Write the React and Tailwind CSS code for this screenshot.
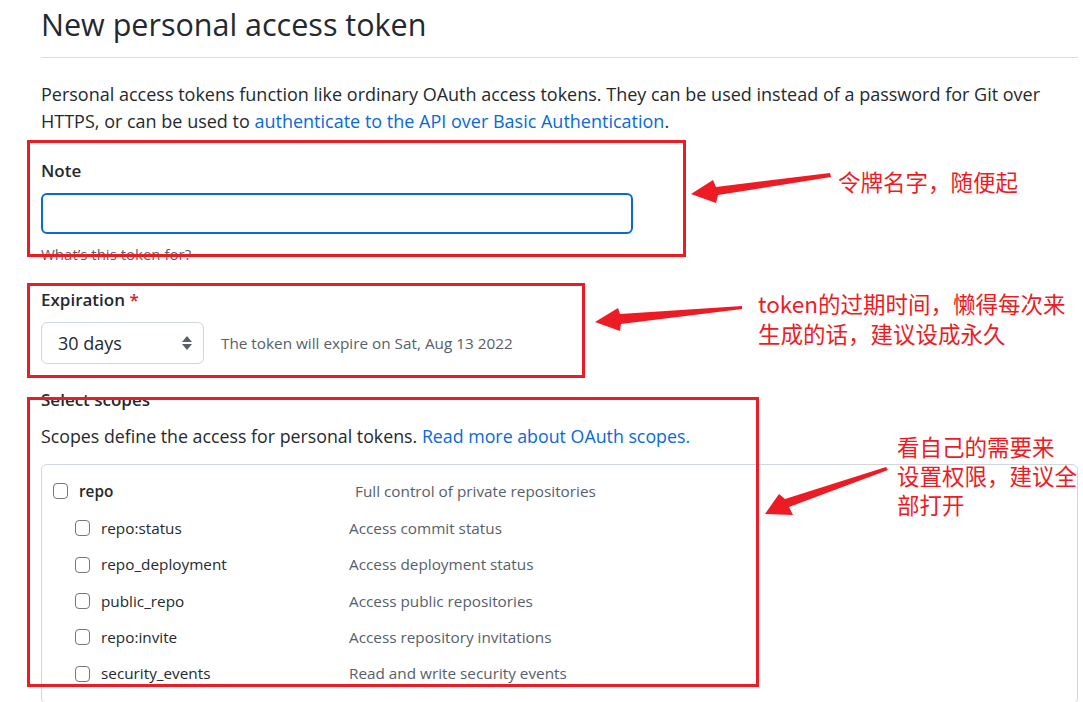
import React from "react";

const rows = [
  ["repo:status", "Access commit status"],
  ["repo_deployment", "Access deployment status"],
  ["public_repo", "Access public repositories"],
  ["repo:invite", "Access repository invitations"],
  ["security_events", "Read and write security events"],
];

function Box() {
  return <span className="inline-block w-[15px] h-[16px] rounded-[4px] border border-[#767676] bg-white shrink-0" />;
}

export default function App() {
  return (
    <div className="relative w-[1083px] h-[702px] overflow-hidden bg-white text-[#24292f] font-['Open_Sans','Noto_Sans',sans-serif]">
      <div className="pl-[41px] pr-[5px]">
        <h1 className="text-[30.5px] leading-[40px] pt-[4px] pb-[13px] border-b border-[#d8dee4] font-normal">
          New personal access token
        </h1>
        <p className="mt-[23px] w-[1000px] text-[18px] leading-[27px]">
          Personal access tokens function like ordinary OAuth access tokens. They can be used instead of a password for Git over HTTPS, or can be used to <span className="text-[#0969da]">authenticate to the API over Basic Authentication</span>.
        </p>
        <div className="mt-[23px] text-[17px] leading-[25px] font-semibold">Note</div>
        <div className="mt-[10px] w-[592px] h-[41px] rounded-[6px] border-2 border-[#0969da] bg-white" />
        <div className="mt-[10px] text-[15px] leading-[21px] text-[#57606a]">What’s this token for?</div>
        <div className="mt-[22px] text-[17px] leading-[25px] font-semibold">
          Expiration <span className="text-[#cf222e]">*</span>
        </div>
        <div className="mt-[10px] flex items-center">
          <div className="w-[163px] h-[42px] rounded-[6px] border border-[#d0d7de] bg-white flex items-center justify-between pl-[16px] pr-[10px]">
            <span className="text-[18px]">30 days</span>
            <svg width="12" height="18" viewBox="0 0 12 18">
              <path d="M6 2 L11 8 L1 8 Z" fill="#57606a" />
              <path d="M6 16 L11 10 L1 10 Z" fill="#57606a" />
            </svg>
          </div>
          <span className="ml-[17px] text-[15.3px] text-[#57606a]">The token will expire on Sat, Aug 13 2022</span>
        </div>
        <div className="mt-[23px] text-[17px] leading-[25px] font-semibold">Select scopes</div>
        <p className="mt-[10px] text-[17.8px] leading-[28px]">
          Scopes define the access for personal tokens. <span className="text-[#0969da]">Read more about OAuth scopes.</span>
        </p>
        <div className="mt-[14px] h-[240px] rounded-[6px] border border-[#d0d7de]">
          <div className="flex items-center h-[26px] mt-[13px] pl-[11px]">
            <Box />
            <span className="ml-[11px] w-[276px] text-[15.3px] font-semibold">repo</span>
            <span className="text-[15.3px] text-[#57606a]">Full control of private repositories</span>
          </div>
          <div className="mt-[6px]">
            {rows.map(([a, b]) => (
              <div key={a} className="flex items-center h-[36.4px] pl-[33px]">
                <Box />
                <span className="ml-[11px] w-[248px] text-[15.3px]">{a}</span>
                <span className="text-[15.3px] text-[#57606a]">{b}</span>
              </div>
            ))}
          </div>
        </div>
      </div>

      {/* annotations */}
      <div className="absolute left-[27px] top-[140px] w-[659px] h-[117px] border-[3px] border-[#ed1c24]" />
      <div className="absolute left-[27px] top-[283px] w-[558px] h-[95px] border-[3px] border-[#ed1c24]" />
      <div className="absolute left-[27px] top-[397px] w-[732px] h-[290px] border-[3px] border-[#ed1c24]" />

      <svg className="absolute left-0 top-0" width="1083" height="702" viewBox="0 0 1083 702">
        <polygon points="691,194 713,180 716,187 830,173 831,177 718,195 716,203" fill="#ed1c24" />
        <polygon points="595,322 618,308 620,314 742,306 742,309 621,324 620,331" fill="#ed1c24" />
        <polygon points="765,514 779,494 785,499 886,467 888,470 789,507 793,515" fill="#ed1c24" />
      </svg>

      <div className="absolute left-[838px] top-[166px] text-[22.5px] leading-[30px] text-[#ed1c24] font-['Noto_Sans_CJK_SC',sans-serif]">
        令牌名字，随便起
      </div>
      <div className="absolute left-[758px] top-[288px] text-[22.5px] leading-[30px] text-[#ed1c24] font-['Noto_Sans_CJK_SC',sans-serif] whitespace-nowrap">
        <div>token的过期时间，懒得每次来</div>
        <div>生成的话，建议设成永久</div>
      </div>
      <div className="absolute left-[897px] top-[432px] text-[22.5px] leading-[29px] text-[#ed1c24] font-['Noto_Sans_CJK_SC',sans-serif] whitespace-nowrap">
        <div>看自己的需要来</div>
        <div>设置权限，建议全</div>
        <div>部打开</div>
      </div>
    </div>
  );
}
